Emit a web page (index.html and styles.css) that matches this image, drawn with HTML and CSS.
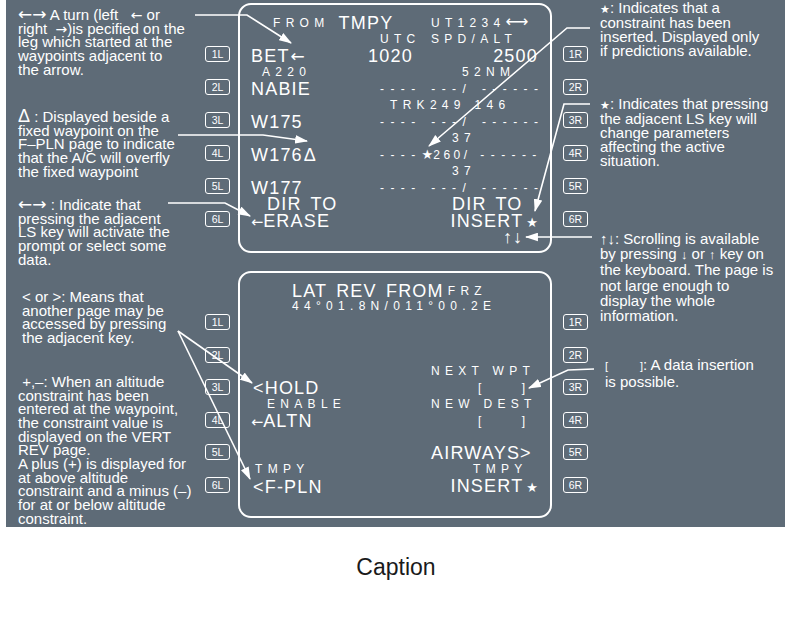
FILE: index.html
```html
<!DOCTYPE html>
<html>
<head>
    <title>F-PLN / LAT REV pages</title>
    <meta name="viewport" content="width=device-width, initial-scale=1.0">
    <link rel="stylesheet" href="styles.css">
</head>
<body>
    <div class="figure">
        <div class="panel">
            <div class="notes notes-left">
                <p class="note n-turn"><span class="arr">←→</span> A turn (left&nbsp;&nbsp; <span class="arr-s">←</span> or<br>right&nbsp; <span class="arr-s">→</span>)is pecified on the<br>leg which started at the<br>waypoints adjacent to<br>the arrow.</p>
                <p class="note n-delta"><span class="delta">Δ</span> : Displayed beside a<br>fixed waypoint on the<br>F–PLN page to indicate<br>that the A/C will overfly<br>the fixed waypoint</p>
                <p class="note n-prompt"><span class="arr">←→</span> : Indicate that<br>pressing the adjacent<br>LS key will activate the<br>prompt or select some<br>data.</p>
                <p class="note n-page">&lt; or &gt;: Means that<br>another page may be<br>accessed by pressing<br>the adjacent key.</p>
                <p class="note n-alt">&nbsp;+,–: When an altitude<br>constraint has been<br>entered at the waypoint,<br>the constraint value is<br>displayed on the VERT<br>REV page.<br>A plus (+) is displayed for<br>at above altitude<br>constraint and a minus (–)<br>for at or below altitude<br>constraint.</p>
            </div>

            <div class="units">
                <!-- F-PLN page -->
                <div class="unit">
                    <div class="keys">
                        <span class="key">1L</span><span class="key">2L</span><span class="key">3L</span>
                        <span class="key">4L</span><span class="key">5L</span><span class="key">6L</span>
                    </div>
                    <div class="screen screen-fpln">
                        <div class="ln"><span class="ttl t22"><span class="sm">FROM</span><span class="lg">TMPY</span></span><span class="sm t180">UT1234<span class="dbl">⟷</span></span></div>
                        <div class="ln"><span class="sm t129">UTC</span><span class="sm t180">SPD/ALT</span></div>
                        <div class="ln"><span class="lg t0">BET<span class="arr-l">←</span></span><span class="lg t117">1020</span><span class="lg end">2500</span></div>
                        <div class="ln"><span class="sm t11">A220</span><span class="sm t211">52NM</span></div>
                        <div class="ln"><span class="lg t0">NABIE</span><span class="sm dash t129">---- ---/ ------</span></div>
                        <div class="ln"><span class="sm t139">TRK249 146</span></div>
                        <div class="ln"><span class="lg t0">W175</span><span class="sm dash t129">---- ---/ ------</span></div>
                        <div class="ln"><span class="sm t201">37</span></div>
                        <div class="ln"><span class="lg t0">W176<span class="ovfly">Δ</span></span><span class="sm dash t129">----<span class="star">★</span><span class="num">260/</span> ------</span></div>
                        <div class="ln"><span class="sm t201">37</span></div>
                        <div class="ln"><span class="lg t0">W177</span><span class="sm dash t129">---- ---/ ------</span></div>
                        <div class="ln"><span class="lg t16">DIR TO</span><span class="lg t201">DIR TO</span></div>
                        <div class="ln"><span class="lg t0"><span class="arr-e">←</span>ERASE</span><span class="lg end">INSERT<span class="star">★</span></span></div>
                        <div class="ln"><span class="lg scroll t252">↑↓</span></div>
                    </div>
                    <div class="keys">
                        <span class="key">1R</span><span class="key">2R</span><span class="key">3R</span>
                        <span class="key">4R</span><span class="key">5R</span><span class="key">6R</span>
                    </div>
                </div>

                <!-- LAT REV page -->
                <div class="unit unit-lat">
                    <div class="keys">
                        <span class="key">1L</span><span class="key">2L</span><span class="key">3L</span>
                        <span class="key">4L</span><span class="key">5L</span><span class="key">6L</span>
                    </div>
                    <div class="screen screen-lat">
                        <div class="ln"><span class="ttl t41"><span class="lg">LAT REV FROM</span><span class="sm">FRZ</span></span></div>
                        <div class="ln"><span class="sm t41">44°01.8N/011°00.2E</span></div>
                        <div class="ln"></div>
                        <div class="ln"></div>
                        <div class="ln"></div>
                        <div class="ln"><span class="sm t180">NEXT WPT</span></div>
                        <div class="ln"><span class="lg t2">&lt;HOLD</span><span class="sm brk t227"><span>[</span><span>]</span></span></div>
                        <div class="ln"><span class="sm t16">ENABLE</span><span class="sm t180">NEW DEST</span></div>
                        <div class="ln"><span class="lg t0"><span class="arr-e">←</span>ALTN</span><span class="sm brk t227"><span>[</span><span>]</span></span></div>
                        <div class="ln"></div>
                        <div class="ln"><span class="lg t180">AIRWAYS&gt;</span></div>
                        <div class="ln"><span class="sm t4">TMPY</span><span class="sm t222">TMPY</span></div>
                        <div class="ln"><span class="lg t2">&lt;F-PLN</span><span class="lg end">INSERT<span class="star">★</span></span></div>
                    </div>
                    <div class="keys">
                        <span class="key">1R</span><span class="key">2R</span><span class="key">3R</span>
                        <span class="key">4R</span><span class="key">5R</span><span class="key">6R</span>
                    </div>
                </div>
            </div>

            <div class="notes notes-right">
                <p class="note n-cstr"><span class="mark">★</span>: Indicates that a<br>constraint has been<br>inserted. Displayed only<br>if predictions available.</p>
                <p class="note n-lsk"><span class="mark">★</span>: Indicates that pressing<br>the adjacent LS key will<br>change parameters<br>affecting the active<br>situation.</p>
                <p class="note n-scroll">↑↓: Scrolling is available<br>by pressing <span class="arr-k">↓</span> or <span class="arr-k">↑</span> key on<br>the keyboard. The page is<br>not large enough to<br>display the whole<br>information.</p>
                <p class="note n-insert"><span class="brk-n"><span>[</span><span>]</span></span>: A data insertion<br>is possible.</p>
            </div>

            <!-- leader lines -->
            <svg class="leaders" viewBox="6 0 779 527" width="779" height="527">
                <defs>
                    <marker id="tip" viewBox="0 0 12 8" refX="11" refY="4" markerWidth="13" markerHeight="9" markerUnits="userSpaceOnUse" orient="auto">
                        <path d="M0 0L12 4L0 8z" fill="#fff"/>
                    </marker>
                </defs>
                <polyline points="195,15 247,15 291,43" marker-end="url(#tip)"/>
                <polyline points="178,135 263,135 307,141" marker-end="url(#tip)"/>
                <polyline points="168,203 225,203 250,216" marker-end="url(#tip)"/>
                <polyline points="178,331 252,383" marker-end="url(#tip)"/>
                <polyline points="178,331 250,479" marker-end="url(#tip)"/>
                <polyline points="590,28 567,28 429,146" marker-end="url(#tip)"/>
                <polyline points="590,104 564,104 535,211" marker-end="url(#tip)"/>
                <polyline points="592,237 526,237" marker-end="url(#tip)"/>
                <polyline points="594,369 568,370 529,388" marker-end="url(#tip)"/>
            </svg>
        </div>
        <p class="caption">Caption</p>
    </div>
</body>
</html>
```

FILE: styles.css
```css
body {
    margin: 0;
    background-color: #fff;
    font-family: "Liberation Sans", "DejaVu Sans", sans-serif;
}

.panel {
    position: relative;
    display: flex;
    width: 779px;
    height: 527px;
    margin-left: 6px;
    background-color: #5e6b77;
    color: #fff;
    overflow: hidden;
}

/* annotations */
.notes {
    box-sizing: border-box;
}

.notes-left {
    width: 199px;
    padding: 8px 0 0 12px;
}

.notes-right {
    width: 197px;
    padding: 1px 0 0 12px;
}

.note {
    margin: 0;
    font-size: 15px;
    line-height: 13.7px;
    white-space: nowrap;
}

.n-delta { margin-top: 33.5px; }
.n-prompt { margin-top: 19.5px; }
.n-page { margin-top: 23.5px; padding-left: 4px; }
.n-alt { margin-top: 30px; }

.n-cstr { line-height: 14px; }
.n-lsk { line-height: 14px; margin-top: 39px; }
.n-scroll { line-height: 15.2px; margin-top: 63px; }
.n-insert { line-height: 15px; margin-top: 34px; padding-left: 5px; }

/* arrow glyphs: DejaVu draws them with solid heads */
.arr,
.arr-s,
.arr-l,
.arr-e {
    font-family: "DejaVu Sans", sans-serif;
    letter-spacing: 0;
}

.arr {
    font-size: 17px;
    line-height: 1px;
}

.arr-s {
    font-size: 14px;
    line-height: 1px;
}

.arr-l {
    font-size: 17px;
    margin-left: 1px;
}

.arr-e {
    font-size: 14.5px;
}

.arr-k {
    font-size: 13px;
}

.delta {
    font-size: 18px;
    line-height: 1px;
}

.mark {
    font-size: 11px;
}

.brk-n {
    display: inline-flex;
    justify-content: space-between;
    width: 38px;
    font-size: 11px;
}

/* the two MCDU pages */
.units {
    width: 383px;
    padding-top: 3px;
    display: flex;
    flex-direction: column;
    gap: 18px;
}

.unit {
    display: flex;
    align-items: flex-start;
}

.keys {
    width: 25px;
    display: flex;
    flex-direction: column;
    gap: 17px;
    padding-top: 43px;
}

.unit-lat .keys {
    gap: 16.6px;
}

.key {
    display: flex;
    align-items: center;
    justify-content: center;
    height: 16px;
    border: 1.5px solid #fff;
    border-radius: 3px;
    box-sizing: border-box;
    font-size: 10.5px;
}

.screen {
    width: 314px;
    margin: 0 11px 0 8px;
    border: 2px solid #fff;
    border-radius: 13px;
    box-sizing: border-box;
    padding: 8.75px 12px 0 11px;
}

.screen-fpln {
    height: 250px;
}

.screen-lat {
    height: 247px;
    padding-top: 8.9px;
}

/* one display line; items share the cell and sit on tab stops */
.ln {
    display: grid;
    height: 16.5px;
    align-items: center;
    white-space: nowrap;
}

.screen-lat .ln {
    height: 16.25px;
}

.ln > * {
    grid-area: 1 / 1;
    justify-self: start;
}

.ln > .end {
    justify-self: end;
}

.sm {
    font-size: 12px;
    line-height: 12px;
    letter-spacing: 5.3px;
}

.lg {
    font-size: 18px;
    line-height: 18px;
    letter-spacing: 1.2px;
    word-spacing: 3px;
}

.ttl {
    display: flex;
    align-items: center;
    gap: 9px;
}

.screen-lat .ttl {
    gap: 4px;
}

.dash {
    letter-spacing: 6.4px;
}

.num {
    letter-spacing: 3.5px;
}

.star {
    font-size: 13px;
    letter-spacing: 0;
    margin-left: 3px;
}

.dash .star {
    margin-left: 0;
}

.dbl {
    font-family: "DejaVu Sans", sans-serif;
    font-size: 16px;
    letter-spacing: 0;
}

.ovfly {
    margin-left: 1px;
}

.scroll {
    letter-spacing: 1px;
}

.brk {
    display: flex;
    justify-content: space-between;
    width: 47px;
    letter-spacing: 0;
}

.t0 { margin-left: 0; }
.t2 { margin-left: 2px; }
.t4 { margin-left: 4px; }
.t11 { margin-left: 11px; }
.t16 { margin-left: 16px; }
.t22 { margin-left: 22px; }
.t41 { margin-left: 41px; }
.t117 { margin-left: 117px; }
.t129 { margin-left: 129px; }
.t139 { margin-left: 139px; }
.t180 { margin-left: 180px; }
.t201 { margin-left: 201px; }
.t211 { margin-left: 211px; }
.t222 { margin-left: 222px; }
.t227 { margin-left: 227px; }
.t252 { margin-left: 252px; }

.leaders {
    position: absolute;
    top: 0;
    left: 0;
    pointer-events: none;
}

.leaders polyline {
    fill: none;
    stroke: #fff;
    stroke-width: 1.6;
}

.caption {
    margin: 27px 0 0;
    text-align: center;
    font-size: 23px;
    line-height: 26px;
    color: #1a1a1a;
}
```
